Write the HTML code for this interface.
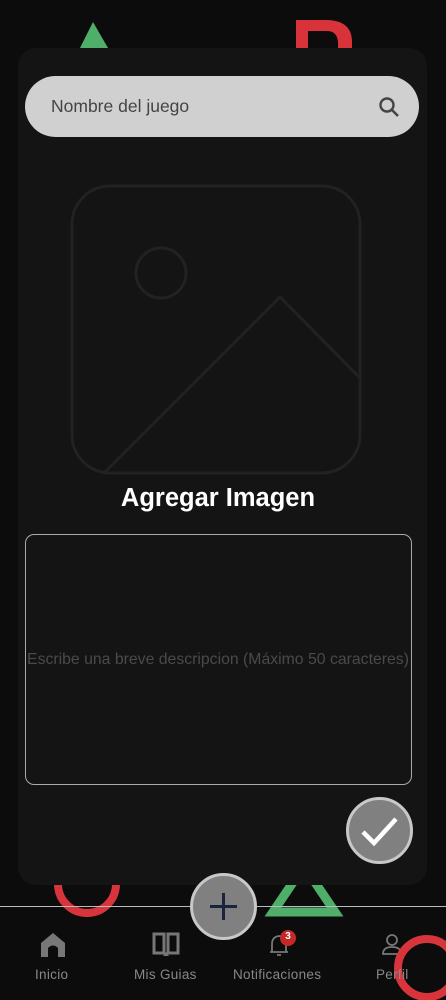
<!DOCTYPE html>
<html><head><meta charset="utf-8"><style>
html,body{margin:0;padding:0;width:446px;height:1000px;overflow:hidden;background:#0c0c0c;font-family:"Liberation Sans",sans-serif;}
.abs{position:absolute;}
</style></head><body>
<svg class="abs" style="left:0;top:0" width="446" height="1000">
  <polygon points="93,22 80,48 108,48" fill="#4fae6a"/>
  <path d="M296,48 V20 H328 Q352,21 352,42 V48 H338 V42 Q337,31 327,31 H308 V48 Z" fill="#d8333b"/>
  <circle cx="87" cy="884" r="29" fill="none" stroke="#d8343c" stroke-width="8"/>
  <polygon points="304,866 273,912 335,912" fill="none" stroke="#4fae6a" stroke-width="9"/>
</svg>
<div class="abs" style="left:18px;top:48px;width:409px;height:837px;background:#141414;border-radius:18px;"></div>
<div class="abs" style="left:25px;top:76px;width:394px;height:61px;background:#d0d0d0;border-radius:31px;"></div>
<div class="abs" style="left:51px;top:96px;font-size:17.5px;color:#444;">Nombre del juego</div>
<svg class="abs" style="left:376px;top:94px" width="26" height="26" viewBox="0 0 26 26"><circle cx="11" cy="11" r="6.5" fill="none" stroke="#444" stroke-width="2.4"/><line x1="15.5" y1="15.5" x2="22" y2="22" stroke="#444" stroke-width="2.6"/></svg>
<svg class="abs" style="left:0;top:0" width="446" height="1000">
  <rect x="72" y="186" width="288" height="287" rx="38" fill="none" stroke="#222" stroke-width="3"/>
  <circle cx="161" cy="273" r="25" fill="none" stroke="#222" stroke-width="3"/>
  <polyline points="105,472 280,297 360,378" fill="none" stroke="#222" stroke-width="3"/>
</svg>
<div class="abs" style="left:0;width:436px;top:484px;text-align:center;font-size:25.5px;font-weight:bold;color:#fff;">Agregar Imagen</div>
<div class="abs" style="left:25px;top:534px;width:385px;height:249px;border:1px solid #aaa;border-radius:9px;"></div>
<div class="abs" style="left:0;width:436px;top:651px;text-align:center;font-size:15.8px;color:#4a4a4a;">Escribe una breve descripcion (Máximo 50 caracteres)</div>
<div class="abs" style="left:346px;top:797px;width:61px;height:61px;border-radius:50%;background:#808080;border:3px solid #c8c8c8;"></div>
<svg class="abs" style="left:346px;top:797px" width="67" height="67"><polyline points="17,35 28,46 50,22" fill="none" stroke="#fff" stroke-width="4.5"/></svg>
<div class="abs" style="left:0;top:906px;width:446px;height:1px;background:#bbb;"></div>
<div class="abs" style="left:190px;top:873px;width:61px;height:61px;border-radius:50%;background:#808080;border:3px solid #c8c8c8;"></div>
<svg class="abs" style="left:190px;top:873px" width="67" height="67"><path d="M33.5,20 V47 M20,33.5 H47" stroke="#1a2340" stroke-width="3"/></svg>
<svg class="abs" style="left:0;top:0" width="446" height="1000">
  <path d="M41,957 V943 L53,933 L65,943 V957 Z" fill="#777"/>
  <path d="M48,957 V948 Q53,943 58,948 V957" fill="#0c0c0c"/>
  <path d="M154,934 H164 V953 H154 Z M168,934 H178 V953 H168 Z" fill="none" stroke="#777" stroke-width="3"/>
  <path d="M166,952 l-3,4 h6 z" fill="#777"/>
  <path d="M272,952 V944 Q272,937 279,936 Q286,937 286,944 V952 Z M270,952 H288 M277,955 H281" fill="none" stroke="#777" stroke-width="1.8"/>
  <circle cx="288" cy="938" r="8" fill="#c62828"/>
  <circle cx="392" cy="940" r="5" fill="none" stroke="#777" stroke-width="1.8"/>
  <path d="M383,954 Q383,947 392,947 Q401,947 401,954 Z" fill="none" stroke="#777" stroke-width="1.8"/>
  <circle cx="427" cy="968" r="29" fill="none" stroke="#d8343c" stroke-width="8"/>
</svg>
<div class="abs" style="left:282px;top:931px;width:12px;text-align:center;font-size:10px;font-weight:bold;color:#fff;">3</div>
<div class="abs" style="top:967px;left:0;width:446px;font-size:13.5px;color:#888;letter-spacing:0.3px;">
  <span class="abs" style="left:35px;">Inicio</span>
  <span class="abs" style="left:134px;">Mis Guias</span>
  <span class="abs" style="left:233px;">Notificaciones</span>
  <span class="abs" style="left:376px;">Perfil</span>
</div>
</body></html>
